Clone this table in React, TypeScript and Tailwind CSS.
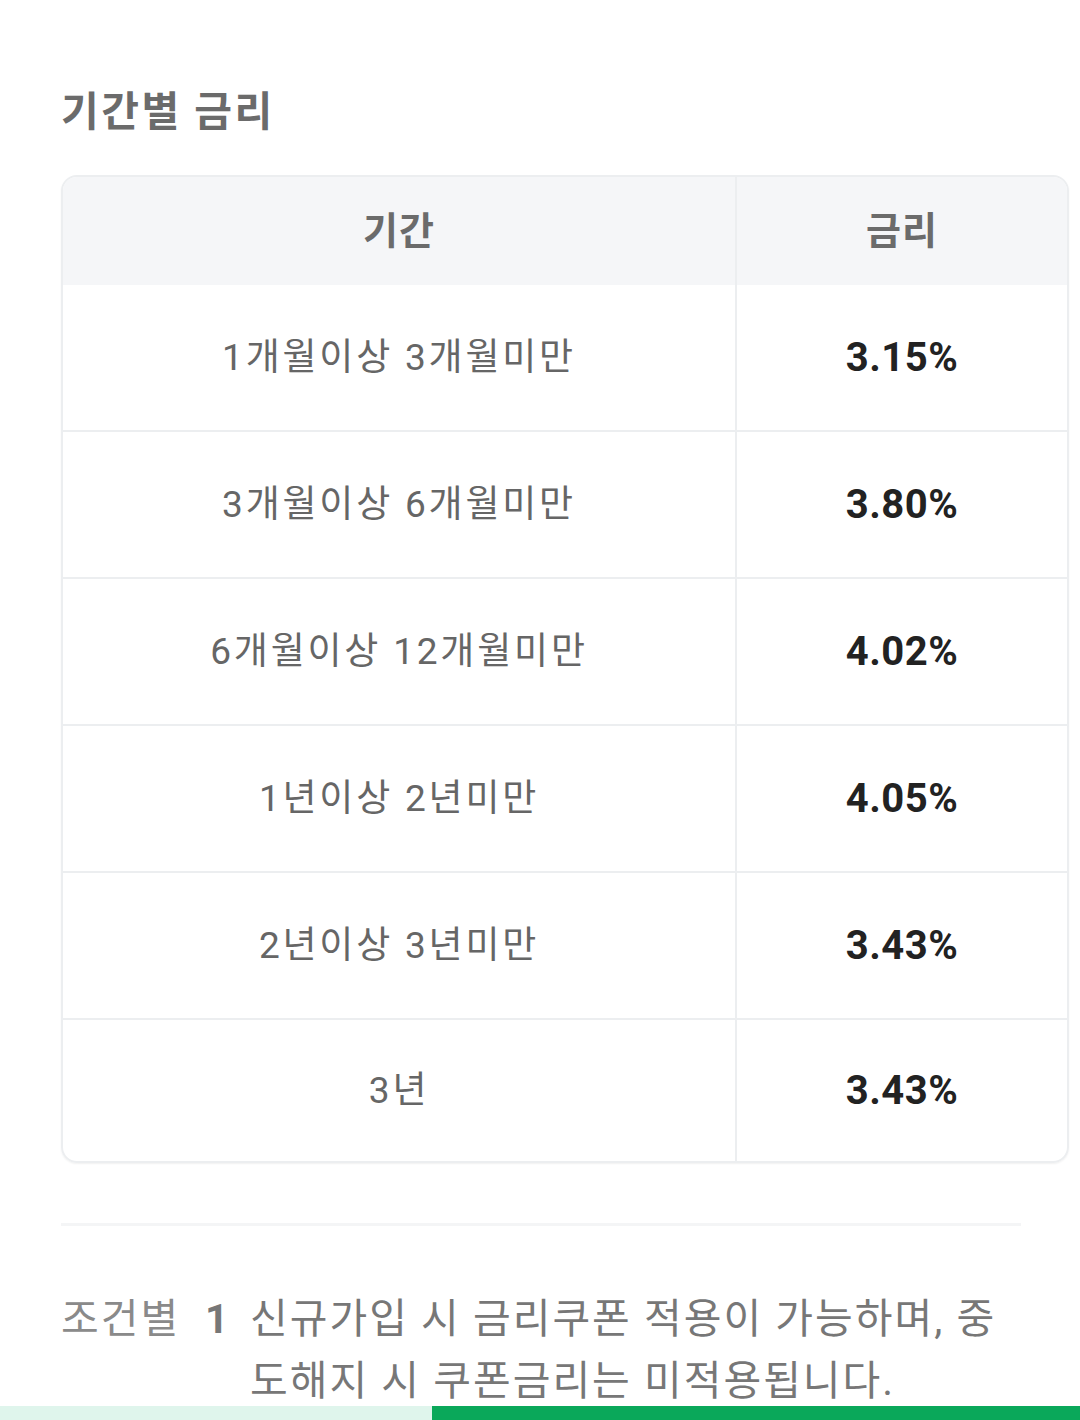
import React from "react";

const rows = [
  ["1개월이상 3개월미만", "3.15%"],
  ["3개월이상 6개월미만", "3.80%"],
  ["6개월이상 12개월미만", "4.02%"],
  ["1년이상 2년미만", "4.05%"],
  ["2년이상 3년미만", "3.43%"],
  ["3년", "3.43%"],
];

export default function App() {
  return (
    <div
      className="w-[1080px] h-[1420px] bg-white relative overflow-hidden"
      style={{ fontFamily: "Roboto, 'Noto Sans CJK KR', sans-serif" }}
    >
      <div className="pl-[61px] pr-[11px] pt-[82px]">
        <h2 className="text-[41px] font-bold text-[#6b6b6b] leading-[60px] tracking-[2.5px]">기간별 금리</h2>
        <div className="mt-[33px] border-2 border-[#eceef0] rounded-[16px] overflow-hidden shadow-[0_1px_2px_rgba(0,0,0,0.06)]">
          <div className="grid grid-cols-[674px_1fr] bg-[#f5f6f8] h-[108px]">
            <div className="flex items-center justify-center border-r-2 border-[#eceef0] text-[38px] font-bold text-[#6b6b6b] tracking-[1px]">기간</div>
            <div className="flex items-center justify-center text-[38px] font-bold text-[#6b6b6b] tracking-[1px]">금리</div>
          </div>
          {rows.map(([p, r], i) => (
            <div
              key={i}
              className={`grid grid-cols-[674px_1fr] ${
                i === 0 ? "h-[145px]" : i === rows.length - 1 ? "h-[143px] border-t-2 border-[#eceef0]" : "h-[147px] border-t-2 border-[#eceef0]"
              }`}
            >
              <div className="flex items-center justify-center border-r-2 border-[#eceef0] text-[37px] text-[#666666] tracking-[2.8px]">{p}</div>
              <div className="flex items-center justify-center text-[40px] font-bold text-[#222222] tracking-[0.5px]">{r}</div>
            </div>
          ))}
        </div>
        <div className="mt-[60px] mr-[48px] h-[3px] bg-[#f4f5f6]" />
        <div className="mt-[62px] flex text-[41px] leading-[62px] text-[#777777] tracking-[2px]">
          <span className="w-[144px] shrink-0 text-[#8a8a8a]">조건별</span>
          <span className="w-[45px] shrink-0 font-bold text-[#777777]">1</span>
          <span className="w-[760px]">신규가입 시 금리쿠폰 적용이 가능하며, 중도해지 시 쿠폰금리는 미적용됩니다.</span>
        </div>
      </div>
      <div className="absolute left-0 bottom-0 w-full h-[14px] flex">
        <div className="w-[432px] bg-[#dff5ec]" />
        <div className="flex-1 bg-[#0aa85a]" />
      </div>
    </div>
  );
}
